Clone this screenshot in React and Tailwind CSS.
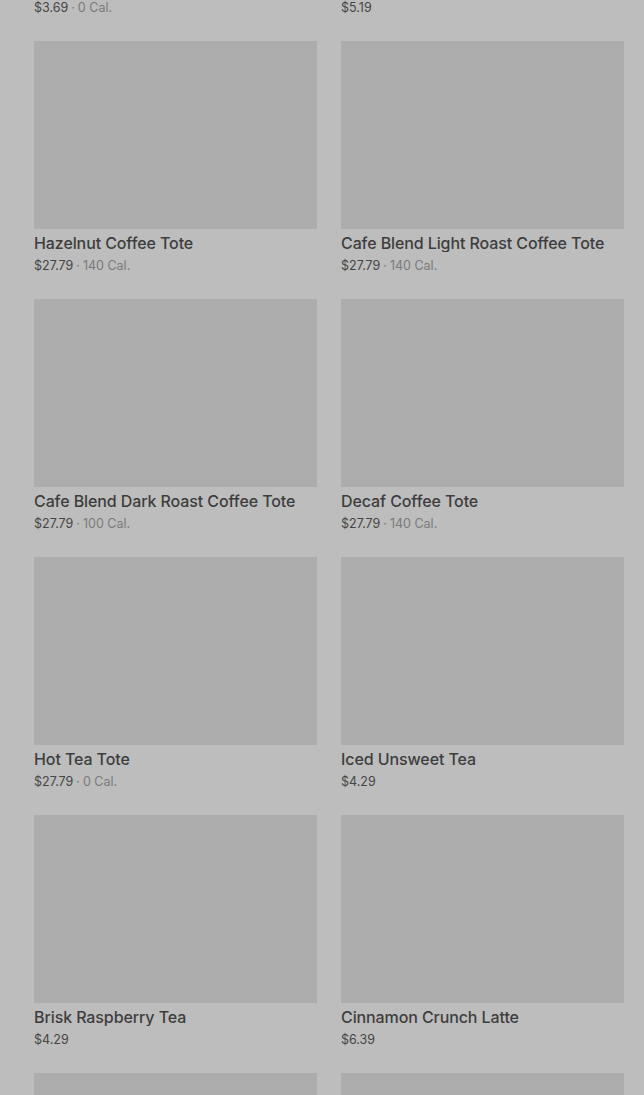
const items = [
  { name: "Iced Tea", price: "$3.69", cal: "0 Cal." },
  { name: "Lemonade", price: "$5.19" },
  { name: "Hazelnut Coffee Tote", price: "$27.79", cal: "140 Cal." },
  { name: "Cafe Blend Light Roast Coffee Tote", price: "$27.79", cal: "140 Cal." },
  { name: "Cafe Blend Dark Roast Coffee Tote", price: "$27.79", cal: "100 Cal." },
  { name: "Decaf Coffee Tote", price: "$27.79", cal: "140 Cal." },
  { name: "Hot Tea Tote", price: "$27.79", cal: "0 Cal." },
  { name: "Iced Unsweet Tea", price: "$4.29" },
  { name: "Brisk Raspberry Tea", price: "$4.29" },
  { name: "Cinnamon Crunch Latte", price: "$6.39" },
  { name: "Chai Tea Latte", price: "$5.49" },
  { name: "Caramel Latte", price: "$6.39" },
];

function ItemCard({ item }) {
  return (
    <div className="flex flex-col">
      <div className="h-[188px] w-full bg-[#adadad]" />
      <div className="pt-[5px] pb-[25px]">
        <div className="text-[16px] leading-[18px] font-medium tracking-[-0.1px] text-[#3d3d3d] truncate">
          {item.name}
        </div>
        <div className="mt-[6px] h-[16px] text-[12.5px] leading-[16px] text-[#454545]">
          {item.price}
          {item.cal && (
            <span className="text-[#7a7a7a]">
              <span className="mx-[3px]">·</span>
              {item.cal}
            </span>
          )}
        </div>
      </div>
    </div>
  );
}

export default function App() {
  return (
    <div
      className="h-[1095px] overflow-hidden bg-[#bdbdbd]"
      style={{ fontFamily: "Inter, 'Noto Sans', sans-serif" }}
    >
      <div className="mt-[-217px] pl-[34px] pr-[20px] grid grid-cols-2 gap-x-[24px]">
        {items.map((item) => (
          <ItemCard key={item.name} item={item} />
        ))}
      </div>
    </div>
  );
}
